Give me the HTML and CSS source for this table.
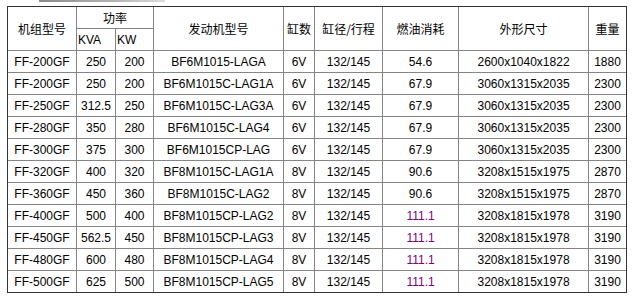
FILE: index.html
```html
<!DOCTYPE html>
<html lang="zh">
<head>
<meta charset="utf-8">
<title>机组参数表</title>
<link rel="stylesheet" href="styles.css">
</head>
<body>
<div class="topbar"></div>
<table class="spec">
  <colgroup>
    <col class="c1"><col class="c2"><col class="c3"><col class="c4"><col class="c5"><col class="c6"><col class="c7"><col class="c8"><col class="c9">
  </colgroup>
  <thead>
    <tr>
      <th rowspan="2">机组型号</th>
      <th colspan="2">功率</th>
      <th rowspan="2">发动机型号</th>
      <th rowspan="2">缸数</th>
      <th rowspan="2">缸径/行程</th>
      <th rowspan="2">燃油消耗</th>
      <th rowspan="2">外形尺寸</th>
      <th rowspan="2" class="last">重量</th>
    </tr>
    <tr>
      <th class="sub">KVA</th>
      <th class="sub">KW</th>
    </tr>
  </thead>
  <tbody>
    <tr><td>FF-200GF</td><td>250</td><td>200</td><td>BF6M1015-LAGA</td><td>6V</td><td>132/145</td><td>54.6</td><td>2600x1040x1822</td><td class="last">1880</td></tr>
    <tr><td>FF-200GF</td><td>250</td><td>200</td><td>BF6M1015C-LAG1A</td><td>6V</td><td>132/145</td><td>67.9</td><td>3060x1315x2035</td><td class="last">2300</td></tr>
    <tr><td>FF-250GF</td><td>312.5</td><td>250</td><td>BF6M1015C-LAG3A</td><td>6V</td><td>132/145</td><td>67.9</td><td>3060x1315x2035</td><td class="last">2300</td></tr>
    <tr><td>FF-280GF</td><td>350</td><td>280</td><td>BF6M1015C-LAG4</td><td>6V</td><td>132/145</td><td>67.9</td><td>3060x1315x2035</td><td class="last">2300</td></tr>
    <tr><td>FF-300GF</td><td>375</td><td>300</td><td>BF6M1015CP-LAG</td><td>6V</td><td>132/145</td><td>67.9</td><td>3060x1315x2035</td><td class="last">2300</td></tr>
    <tr><td>FF-320GF</td><td>400</td><td>320</td><td>BF8M1015C-LAG1A</td><td>8V</td><td>132/145</td><td>90.6</td><td>3208x1515x1975</td><td class="last">2870</td></tr>
    <tr><td>FF-360GF</td><td>450</td><td>360</td><td>BF8M1015C-LAG2</td><td>8V</td><td>132/145</td><td>90.6</td><td>3208x1515x1975</td><td class="last">2870</td></tr>
    <tr><td>FF-400GF</td><td>500</td><td>400</td><td>BF8M1015CP-LAG2</td><td>8V</td><td>132/145</td><td class="fuel">111.1</td><td>3208x1815x1978</td><td class="last">3190</td></tr>
    <tr><td>FF-450GF</td><td>562.5</td><td>450</td><td>BF8M1015CP-LAG3</td><td>8V</td><td>132/145</td><td class="fuel">111.1</td><td>3208x1815x1978</td><td class="last">3190</td></tr>
    <tr><td>FF-480GF</td><td>600</td><td>480</td><td>BF8M1015CP-LAG4</td><td>8V</td><td>132/145</td><td class="fuel">111.1</td><td>3208x1815x1978</td><td class="last">3190</td></tr>
    <tr class="endrow"><td>FF-500GF</td><td>625</td><td>500</td><td>BF8M1015CP-LAG5</td><td>8V</td><td>132/145</td><td class="fuel">111.1</td><td>3208x1815x1978</td><td class="last">3190</td></tr>
  </tbody>
</table>
</body>
</html>
```
FILE: styles.css
```css
html, body {
  margin: 0;
  padding: 0;
  background: #ffffff;
}

body {
  padding: 0 0 0 7px;
  font-family: "Liberation Sans", Arial, "Noto Sans CJK SC", sans-serif;
  font-size: 12px;
  color: #000000;
}

.topbar {
  margin-left: 32px;
  width: 126px;
  height: 2px;
  background: linear-gradient(to right, #8a8a8a, #b4b4b4 60%, #dcdcdc);
}

.spec {
  margin-top: 4px;
  width: 620px;
  table-layout: fixed;
  border-collapse: separate;
  border-spacing: 0;
  border: 1px solid #333333;
}

.c1 { width: 69px; }
.c2 { width: 39px; }
.c3 { width: 38px; }
.c4 { width: 130px; }
.c5 { width: 31px; }
.c6 { width: 68px; }
.c7 { width: 76px; }
.c8 { width: 130px; }
.c9 { width: 37px; }

.spec tr {
  height: 22px;
}

.spec th,
.spec td {
  padding: 0;
  font-weight: normal;
  text-align: center;
  vertical-align: middle;
  white-space: nowrap;
  border-right: 1px solid #858585;
  border-bottom: 1px solid #858585;
  line-height: 14px;
}

.spec th {
  font-family: "Noto Sans CJK SC", "Liberation Sans", sans-serif;
}

.spec th.sub {
  text-align: left;
  padding-left: 1px;
  font-family: "Liberation Sans", Arial, sans-serif;
}

.spec .last {
  border-right: none;
}

.spec tr.endrow {
  height: 21px;
}

.spec tr.endrow td {
  border-bottom: none;
}

.spec td.fuel {
  color: #800080;
}
```
